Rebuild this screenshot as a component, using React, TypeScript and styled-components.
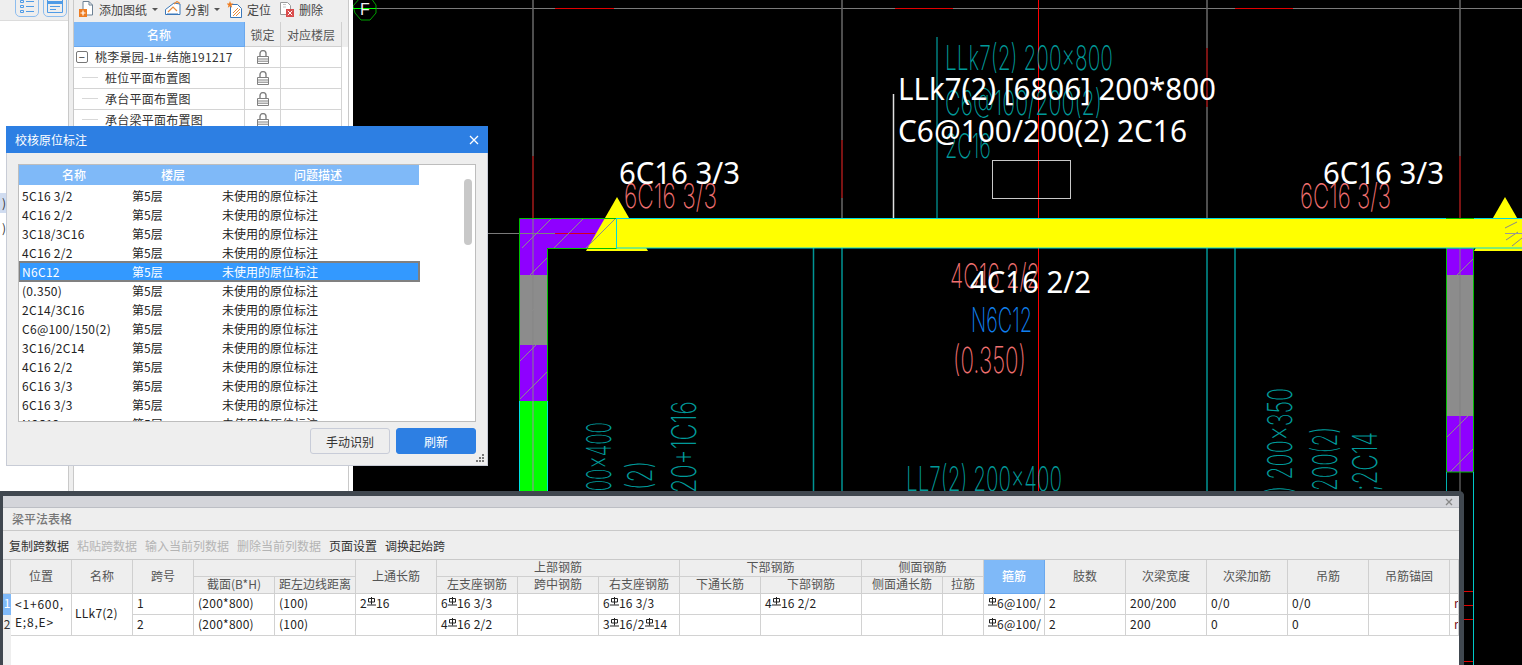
import React from "react";
import styled, { createGlobalStyle } from "styled-components";

const Global = createGlobalStyle`
  html, body { margin: 0; padding: 0; background: #fff; overflow: hidden; }
  * { box-sizing: border-box; }
`;

const FONT = `"Noto Sans CJK SC", "Noto Sans", sans-serif`;

const Screen = styled.div`
  position: relative;
  display: flex;
  width: 1522px;
  height: 665px;
  overflow: hidden;
  font-family: ${FONT};
  font-size: 12px;
  color: #333;
  background: #fff;
`;

/* ---------- left rail ---------- */
const LeftRail = styled.div`
  display: flex;
  flex-direction: column;
  flex: 0 0 69px;
  border-right: 1px solid #c9c9c9;
`;
const RailTools = styled.div`
  display: flex;
  flex: 0 0 21px;
  align-items: flex-end;
  gap: 4px;
  padding: 0 0 3px 15px;
  overflow: hidden;
  background: #eeeeee;
  border-bottom: 1px solid #dcdcdc;
`;
const RailButton = styled.div`
  display: flex;
  flex: 0 0 24px;
  height: 26px;
  align-items: flex-end;
  justify-content: center;
  padding-bottom: 3px;
  border: 1px solid #8dbdee;
  border-radius: 5px;
`;
const RailList = styled.div`
  flex: 1;
  padding-top: 172px;
  background: #fff;
`;
const RailItem = styled.div<{ $on?: boolean }>`
  display: flex;
  justify-content: flex-end;
  width: 6px;
  height: 20px;
  margin-bottom: 5px;
  overflow: hidden;
  line-height: 20px;
  white-space: nowrap;
  background: ${(p) => (p.$on ? "#d0dcf0" : "transparent")};
`;
const Gutter = styled.div`
  flex: 0 0 4px;
  background: #eeeeee;
`;

/* ---------- drawing list ---------- */
const SheetPanel = styled.div`
  display: flex;
  flex-direction: column;
  flex: 0 0 276px;
  border-left: 1px solid #c9c9c9;
  border-right: 1px solid #c9c9c9;
  background: #fff;
`;
const SheetTools = styled.div`
  display: flex;
  flex: 0 0 22px;
  align-items: center;
  padding: 0 0 4px 5px;
  background: #eeeeee;
`;
const Tool = styled.div<{ $gap: number }>`
  display: flex;
  align-items: center;
  gap: 4px;
  margin-right: ${(p) => p.$gap}px;
  color: #444;
  white-space: nowrap;
  line-height: 17px;
`;
const Caret = styled.span`
  width: 0;
  height: 0;
  margin-left: 1px;
  border-left: 3px solid transparent;
  border-right: 3px solid transparent;
  border-top: 3px solid #555;
`;
const SheetRow = styled.div<{ $head?: boolean }>`
  display: grid;
  grid-template-columns: 171px 36px 61px 6px;
  flex: 0 0 ${(p) => (p.$head ? 25 : 21)}px;
`;
const SheetHead = styled.div<{ $blue?: boolean }>`
  display: flex;
  align-items: center;
  justify-content: center;
  font-size: 12px;
  color: ${(p) => (p.$blue ? "#fff" : "#555")};
  background: ${(p) => (p.$blue ? "#7fb9f8" : "#eeeeee")};
  border-right: 1px solid ${(p) => (p.$blue ? "#6aa8ee" : "#d0d0d0")};
  border-bottom: 1px solid ${(p) => (p.$blue ? "#6aa8ee" : "#d0d0d0")};
  font-weight: ${(p) => (p.$blue ? 500 : 400)};
`;
const HeadFill = styled.div`
  background: #eeeeee;
`;
const SheetCell = styled.div<{ $center?: boolean }>`
  display: flex;
  align-items: center;
  justify-content: ${(p) => (p.$center ? "center" : "flex-start")};
  padding-bottom: 1px;
  border-right: 1px solid #d4d4d4;
  border-bottom: 1px solid #d4d4d4;
  color: #333;
  letter-spacing: 0.25px;
  white-space: nowrap;
`;
const TreeBox = styled.span`
  display: flex;
  align-items: center;
  justify-content: center;
  width: 12px;
  height: 12px;
  margin: 0 7px 0 2px;
  border: 1px solid #777;
  border-radius: 2px;
  font-size: 11px;
  line-height: 10px;
`;
const TreeDash = styled.span`
  width: 16px;
  height: 1px;
  margin: 0 7px 0 8px;
  background: #d8d8d8;
`;
const PanelGap = styled.div`
  flex: 0 0 4px;
  background: #fff;
`;

/* ---------- CAD canvas ---------- */
const Canvas = styled.svg`
  display: block;
  flex: 1;
  height: 665px;
  background: #000;
`;
const tones: Record<string, string> = {
  white: "#ffffff",
  teal: "#009a9a",
  red: "#f07070",
  blue: "#1080f0",
};
const CadLabel = styled.text<{ $tone: string; $solid?: boolean; $size: number }>`
  font-family: ${(p) => (p.$solid ? `"Noto Sans", sans-serif` : `Inter, sans-serif`)};
  font-weight: ${(p) => (p.$solid ? 400 : 200)};
  font-size: ${(p) => p.$size}px;
  fill: ${(p) => tones[p.$tone]};
  white-space: pre;
`;
const AxisLetter = styled.text`
  font-family: "Liberation Sans", sans-serif;
  font-size: 16px;
  fill: #f0f0f0;
`;

/* ---------- dialog ---------- */
const Dialog = styled.div`
  position: absolute;
  left: 6px;
  top: 126px;
  display: flex;
  flex-direction: column;
  width: 482px;
  height: 340px;
  background: #eeeeee;
  border: 1px solid #c8ccd6;
  border-top: none;
`;
const DialogTitle = styled.div`
  display: flex;
  flex: 0 0 27px;
  align-items: center;
  justify-content: space-between;
  margin: 0 -1px;
  padding: 0 9px;
  background: #2d7fe3;
  color: #fff;
  font-size: 12px;
`;
const DialogBody = styled.div`
  position: relative;
  display: flex;
  flex: 1;
  flex-direction: column;
  padding: 11px 11px 0;
`;
const ListBox = styled.div`
  position: relative;
  flex: 0 0 258px;
  overflow: hidden;
  background: #fff;
  border: 1px solid #bdbdbd;
`;
const DialogRow = styled.div<{ $selected?: boolean }>`
  position: relative;
  display: grid;
  grid-template-columns: 110px 88px 202px;
  width: 400px;
  height: 19px;
  line-height: 19px;
  color: ${(p) => (p.$selected ? "#fff" : "#222")};
  background: ${(p) => (p.$selected ? "#3399ff" : "transparent")};
  outline: ${(p) => (p.$selected ? "2px solid #808080" : "none")};
  outline-offset: -1px;
  & > span { padding-left: 3px; white-space: nowrap; }
  & > span:first-child { letter-spacing: 0.3px; }
  & > span:last-child { padding-left: 5px; }
`;
const DialogHead = styled.div`
  display: grid;
  grid-template-columns: 110px 88px 202px;
  width: 400px;
  height: 21px;
  background: #7fb9f8;
  border-bottom: 1px solid #fff;
  color: #fff;
  font-weight: 500;
  line-height: 20px;
  text-align: center;
`;
const ScrollThumb = styled.div`
  position: absolute;
  left: 445px;
  top: 14px;
  width: 8px;
  height: 66px;
  border-radius: 4px;
  background: #c8c8c8;
`;
const DialogActions = styled.div`
  display: flex;
  justify-content: flex-end;
  gap: 6px;
  margin-top: 6px;
`;
const ActionButton = styled.div<{ $primary?: boolean }>`
  display: flex;
  align-items: center;
  justify-content: center;
  width: 80px;
  height: 26px;
  border-radius: 3px;
  border: 1px solid ${(p) => (p.$primary ? "#2d7fe3" : "#c8ccd8")};
  background: ${(p) => (p.$primary ? "#2d7fe3" : "#eeeeee")};
  color: ${(p) => (p.$primary ? "#fff" : "#333")};
`;
const Grip = styled.svg`
  position: absolute;
  right: 2px;
  bottom: 2px;
`;

/* ---------- bottom table window ---------- */
const TableWindow = styled.div`
  position: absolute;
  left: 0;
  top: 491px;
  display: flex;
  flex-direction: column;
  width: 1464px;
  height: 174px;
  background: #fff;
  border: solid #40474f;
  border-width: 5px 5px 0 3px;
  border-top-right-radius: 5px;
`;
const WindowStrip = styled.div`
  display: flex;
  flex: 0 0 12px;
  align-items: center;
  justify-content: flex-end;
  padding-right: 6px;
  background: #d4d5da;
  border-bottom: 1px solid #bcbec4;
`;
const WindowTitle = styled.div`
  flex: 0 0 22px;
  padding-left: 9px;
  background: #eeeeee;
  border-bottom: 1px solid #c9c9c9;
  color: #777;
  font-weight: 500;
  line-height: 22px;
`;
const WindowTools = styled.div`
  display: flex;
  flex: 0 0 29px;
  align-items: center;
  gap: 8px;
  padding-left: 6px;
  background: #eeeeee;
  border-bottom: 1px solid #c9c9c9;
`;
const WindowTool = styled.span<{ $off?: boolean }>`
  color: ${(p) => (p.$off ? "#b4b4b4" : "#333")};
`;
const TableArea = styled.div`
  flex: 1;
  overflow: hidden;
  background: linear-gradient(to right, #eeeeee 8px, #ffffff 8px);
`;
const BeamTable = styled.table`
  width: 1456px;
  table-layout: fixed;
  border-collapse: separate;
  border-spacing: 0;
  font-size: 12px;
`;
const Th = styled.th<{ $blue?: boolean }>`
  height: 17px;
  padding: 0 0 2px;
  overflow: hidden;
  white-space: nowrap;
  font-weight: ${(p) => (p.$blue ? 500 : 400)};
  color: ${(p) => (p.$blue ? "#fff" : "#555")};
  line-height: 14px;
  background: ${(p) => (p.$blue ? "#7fb9f8" : "#eeeeee")};
  border-right: 1px solid ${(p) => (p.$blue ? "#6aa8ee" : "#cfcfcf")};
  border-bottom: 1px solid ${(p) => (p.$blue ? "#6aa8ee" : "#cfcfcf")};
`;
const Td = styled.td<{ $tone?: string }>`
  height: 21px;
  padding: 0 0 3px 4px;
  overflow: hidden;
  white-space: nowrap;
  line-height: 16px;
  letter-spacing: 0.25px;
  color: ${(p) => p.$tone ?? "#222"};
  border-right: 1px solid #d2d2d2;
  border-bottom: 1px solid #d2d2d2;
`;
const RowHead = styled.td<{ $on?: boolean }>`
  height: 21px;
  padding: 0 0 3px;
  line-height: 16px;
  text-align: center;
  color: ${(p) => (p.$on ? "#fff" : "#333")};
  background: ${(p) => (p.$on ? "#7fb9f8" : "#eeeeee")};
`;
const SpanCell = styled(Td)<{ $wide?: boolean }>`
  padding-left: ${(p) => (p.$wide ? 4 : 3)}px;
  line-height: 18px;
  letter-spacing: ${(p) => (p.$wide ? 0.8 : 0.25)}px;
  white-space: pre;
`;
const Mark = styled.svg`
  display: inline-block;
  vertical-align: 2px;
`;

/* ---------- small drawings ---------- */
const Rebar = () => (
  <Mark width="9" height="9" viewBox="0 0 9 9" fill="none" stroke="#222" strokeWidth="1">
    <path d="M1.500 1.500h6v3.500h-6zM4.500 0v7.500M0 8h9" />
  </Mark>
);
const Lock = () => (
  <svg width="12" height="14" viewBox="0 0 12 14" fill="none" stroke="#808080" strokeWidth="1">
    <path d="M3 6V3.600a3 3 0 0 1 6 0V6" strokeWidth="1.400" />
    <path d="M.5 6.500h11v7H.5zM.5 9h11M.5 11.200h11" />
  </svg>
);
const AddIcon = () => (
  <svg width="16" height="17" viewBox="0 0 16 17" fill="none">
    <path d="M4 .5h6l3.500 3.500v10H4z" fill="#fff" stroke="#6d8194" />
    <path d="M10 .5V4h3.500" stroke="#6d8194" />
    <rect x="0" y="8" width="8" height="8" fill="#ee7d22" />
    <path d="M4 9.500v5M1.500 12h5" stroke="#fff" strokeWidth="1.200" />
  </svg>
);
const SplitIcon = () => (
  <svg width="16" height="16" viewBox="0 0 16 16" fill="none">
    <path d="M.5 8.500 9 2l6 1v10.500H.5z" fill="#fff" stroke="#3a77b8" />
    <path d="M3 11 8 6l4 4M9 3l3-2.500 3 2" stroke="#e88b3a" strokeWidth="1.200" />
    <path d="M2 13h11" stroke="#3a77b8" />
  </svg>
);
const LocateIcon = () => (
  <svg width="16" height="17" viewBox="0 0 16 17" fill="none">
    <path d="M3.500 3.500h7l4 4v9h-11z" fill="#fff" stroke="#3a77b8" />
    <path d="M6 15l7-7M6 12l5-5M9 15l4-4" stroke="#e88b3a" />
    <path d="M3 0l1 2.400 2.500.2-2 1.600.7 2.500L3 5.300.8 6.700l.7-2.500-2-1.600L2 2.400z" fill="#ee7d22" />
  </svg>
);
const DeleteIcon = () => (
  <svg width="15" height="16" viewBox="0 0 15 16" fill="none">
    <path d="M.5 1.500h7l3 3v9H.5z" fill="#fff" stroke="#9a9a9a" />
    <path d="M3 3.500h3M3 6h3" stroke="#c6c6c6" />
    <rect x="6" y="8" width="8" height="8" fill="#d94b4b" />
    <path d="M7.800 9.800l4.400 4.400M12.200 9.800l-4.400 4.400" stroke="#fff" />
  </svg>
);
const ListGlyph = () => (
  <svg width="14" height="13" viewBox="0 0 14 13" fill="none" stroke="#4f9be6">
    <path d="M.5.500h3v2h-3zM.5 5.500h3v2h-3zM.5 10.500h3v2h-3zM6 1.500h8M6 6.500h8M6 11.500h8" />
  </svg>
);
const WindowGlyph = () => (
  <svg width="16" height="14" viewBox="0 0 16 14" fill="none" stroke="#4f9be6">
    <path d="M.5.500h15v13H.5z" />
    <path d="M.5 3.500h15" strokeWidth="3" />
    <path d="M3 7.500h10M3 10.500h6" />
  </svg>
);

/* ---------- data ---------- */
const sheets = ["桩位平面布置图", "承台平面布置图", "承台梁平面布置图"];
const notes = [
  "5C16 3/2", "4C16 2/2", "3C18/3C16", "4C16 2/2", "N6C12", "(0.350)", "2C14/3C16",
  "C6@100/150(2)", "3C16/2C14", "4C16 2/2", "6C16 3/3", "6C16 3/3", "N6C12",
];
const widths = [8, 61, 61, 61, 81, 81, 81, 81, 81, 81, 81, 101, 81, 41, 61, 81, 81, 81, 81, 81, 9];

const hatch = (x0: number, x1: number, y0: number, y1: number, step: number) => {
  const out: React.ReactNode[] = [];
  const run = x1 - x0;
  for (let y = y0 + step; y < y1 + run; y += step) {
    const top = Math.max(y - run, y0);
    const bottom = Math.min(y, y1);
    out.push(
      <line
        key={`${x0}-${y0}-${y}`}
        x1={x0 + (y - bottom)}
        y1={bottom}
        x2={x0 + (y - top)}
        y2={top}
        stroke="#8c8c8c"
      />
    );
  }
  return out;
};

const Thin = ({ x, y, w, size = 34, tone = "teal", rot, children }: {
  x: number; y: number; w: number; size?: number; tone?: string; rot?: boolean; children: string;
}) => (
  <CadLabel
    x={x}
    y={y}
    $tone={tone}
    $size={size}
    textLength={w}
    lengthAdjust="spacingAndGlyphs"
    transform={rot ? `rotate(-90 ${x} ${y})` : undefined}
  >
    {children}
  </CadLabel>
);
const Bold = ({ x, y, w, children }: { x: number; y: number; w: number; children: string }) => (
  <CadLabel x={x} y={y} $tone="white" $solid $size={31} textLength={w} lengthAdjust="spacingAndGlyphs">
    {children}
  </CadLabel>
);

const Cad = () => (
  <Canvas viewBox="353 0 1169 665" width="1169" height="665">
    {/* axes */}
    <g stroke="#7a7a7a" strokeWidth="1">
      <line x1="376" y1="8.500" x2="1522" y2="8.500" />
      <line x1="353" y1="233.500" x2="590" y2="233.500" />
    </g>
    <g stroke="#686868" strokeWidth="1.500">
      <line x1="533" y1="0" x2="533" y2="218" />
      <line x1="842" y1="0" x2="842" y2="218" />
      <line x1="1207" y1="0" x2="1207" y2="218" />
      <line x1="1460" y1="0" x2="1460" y2="218" />
    </g>
    <g stroke="#e00000" strokeWidth="1">
      <line x1="555" y1="8.500" x2="614" y2="8.500" />
      <line x1="895" y1="8.500" x2="953" y2="8.500" />
      <line x1="1235" y1="8.500" x2="1293" y2="8.500" />
    </g>
    <g stroke="#8b0000" strokeWidth="1.500">
      <line x1="533" y1="156" x2="533" y2="218" />
      <line x1="842" y1="140" x2="842" y2="198" />
      <line x1="1207" y1="48" x2="1207" y2="107" />
      <line x1="1460" y1="156" x2="1460" y2="218" />
    </g>
    <line x1="1038.500" y1="0" x2="1038.500" y2="491" stroke="#ff0000" strokeWidth="1" />
    <line x1="937" y1="37" x2="937" y2="218" stroke="#007f7f" strokeWidth="1.500" />
    <line x1="893.500" y1="94" x2="893.500" y2="218" stroke="#e0e0e0" strokeWidth="1.500" />
    <rect x="992.500" y="160.500" width="78" height="38" fill="none" stroke="#c8c8c8" />

    {/* F axis bubble */}
    <polygon points="360,-2 371,-2 376,5 376,13 370,20 361,20 355,13 353,6" fill="none" stroke="#00a000" />
    <line x1="353" y1="8.500" x2="376" y2="8.500" stroke="#00ff00" />
    <AxisLetter x="360" y="15">F</AxisLetter>

    {/* secondary beams */}
    <g stroke="#009494" strokeWidth="1.500">
      <line x1="813.500" y1="248" x2="813.500" y2="491" />
      <line x1="842" y1="248" x2="842" y2="491" />
      <line x1="1207" y1="248" x2="1207" y2="491" />
      <line x1="1235" y1="248" x2="1235" y2="491" />
    </g>

    {/* left column */}
    <rect x="519" y="219" width="97" height="29" fill="#8f00ff" />
    <rect x="519" y="248" width="28" height="27" fill="#8f00ff" />
    <rect x="519" y="275" width="28" height="70" fill="#8c8c8c" />
    <rect x="519" y="345" width="28" height="56" fill="#8f00ff" />
    <rect x="519" y="401" width="28" height="90" fill="#00ff00" />
    <line x1="533" y1="401" x2="533" y2="491" stroke="#70b070" strokeWidth="1.500" />
    <line x1="533" y1="219" x2="533" y2="401" stroke="#858585" strokeWidth="1" />
    <line x1="555" y1="233.500" x2="595" y2="233.500" stroke="#d00020" />
    <line x1="519" y1="233.500" x2="555" y2="233.500" stroke="#808080" />
    <polygon points="617,197 648,251 586,251" fill="#ffff00" />
    {hatch(519, 616, 219, 248, 32)}
    {hatch(519, 547, 248, 401, 38)}
    <path d="M519.500 491V218.500H616.500V248.500H547.500V491" fill="none" stroke="#00c000" strokeWidth="1" />
    <line x1="519.500" y1="401" x2="519.500" y2="491" stroke="#00e0e0" />
    <line x1="547.500" y1="401" x2="547.500" y2="491" stroke="#00e0e0" />

    {/* right column */}
    <polygon points="1505,197 1536,251 1474,251" fill="#ffff00" />
    <rect x="1446" y="248" width="28" height="27" fill="#8f00ff" />
    <rect x="1446" y="275" width="28" height="141" fill="#8c8c8c" />
    <rect x="1446" y="416" width="28" height="56" fill="#8f00ff" />
    {hatch(1446, 1474, 248, 472, 38)}
    <line x1="1460" y1="248" x2="1460" y2="491" stroke="#808080" strokeWidth="1" />
    <rect x="1446.500" y="248" width="27" height="224" fill="none" stroke="#00c000" />
    <line x1="1446.500" y1="472" x2="1446.500" y2="491" stroke="#00b0b0" />
    <line x1="1473.500" y1="472" x2="1473.500" y2="665" stroke="#00c8c8" />
    <g stroke="#e00000">
      <line x1="1464" y1="591.500" x2="1473" y2="591.500" />
      <line x1="1464" y1="605.500" x2="1473" y2="605.500" />
      <line x1="1464" y1="619.500" x2="1473" y2="619.500" />
      <line x1="1464" y1="661.500" x2="1473" y2="661.500" />
    </g>

    {/* selected beam */}
    <rect x="616.500" y="218.500" width="906" height="29.500" fill="#ffff00" stroke="#00d8e0" />
    <line x1="1446" y1="218.500" x2="1474" y2="218.500" stroke="#00c000" />
    <path d="M1505 228l12-6M1506 240l12-8M1512 246l10-8" stroke="#888" fill="none" />
    <line x1="1505" y1="233.500" x2="1522" y2="233.500" stroke="#999" />

    {/* drawing text */}
    <Thin x={945} y={70} w={168}>LLk7(2) 200x800</Thin>
    <Thin x={945} y={115} w={157}>C6@100/200(2)</Thin>
    <Thin x={945} y={158} w={46}>2C16</Thin>
    <Thin x={624} y={208} w={93} tone="red">6C16 3/3</Thin>
    <Thin x={1300} y={208} w={91} tone="red">6C16 3/3</Thin>
    <Thin x={950} y={288} w={90} tone="red">4C16 2/2</Thin>
    <Thin x={971} y={332} w={61} tone="blue">N6C12</Thin>
    <Thin x={953} y={373} w={73} size={36} tone="red">(0.350)</Thin>
    <Thin x={906} y={491} w={156}>LL7(2) 200x400</Thin>
    <Thin x={611} y={503} w={81} rot>200x400</Thin>
    <Thin x={652} y={490} w={29} rot>(2)</Thin>
    <Thin x={696} y={493} w={92} rot>20+1C16</Thin>
    <Thin x={1292} y={493} w={105} rot>) 200x350</Thin>
    <Thin x={1337} y={491} w={64} rot>200(2)</Thin>
    <Thin x={1377} y={491} w={59} rot>;2C14</Thin>

    <Bold x={898} y={100} w={318}>LLk7(2) [6806] 200*800</Bold>
    <Bold x={898} y={142} w={289}>C6@100/200(2) 2C16</Bold>
    <Bold x={619} y={184} w={121}>6C16 3/3</Bold>
    <Bold x={1323} y={184} w={121}>6C16 3/3</Bold>
    <Bold x={970} y={293} w={121}>4C16 2/2</Bold>
  </Canvas>
);

export default function App() {
  return (
    <Screen>
      <Global />
      <LeftRail>
        <RailTools>
          <RailButton><ListGlyph /></RailButton>
          <RailButton><WindowGlyph /></RailButton>
        </RailTools>
        <RailList>
          <RailItem $on>)</RailItem>
          <RailItem>)</RailItem>
        </RailList>
      </LeftRail>
      <Gutter />
      <SheetPanel>
        <SheetTools>
          <Tool $gap={7}><AddIcon />添加图纸<Caret /></Tool>
          <Tool $gap={7}><SplitIcon />分割<Caret /></Tool>
          <Tool $gap={9}><LocateIcon />定位</Tool>
          <Tool $gap={0}><DeleteIcon />删除</Tool>
        </SheetTools>
        <SheetRow $head>
          <SheetHead $blue>名称</SheetHead>
          <SheetHead>锁定</SheetHead>
          <SheetHead>对应楼层</SheetHead>
          <HeadFill />
        </SheetRow>
        <SheetRow>
          <SheetCell><TreeBox>−</TreeBox>桃李景园-1#-结施191217</SheetCell>
          <SheetCell $center><Lock /></SheetCell>
          <SheetCell />
        </SheetRow>
        {sheets.map((s) => (
          <SheetRow key={s}>
            <SheetCell><TreeDash />{s}</SheetCell>
            <SheetCell $center><Lock /></SheetCell>
            <SheetCell />
          </SheetRow>
        ))}
      </SheetPanel>
      <PanelGap />
      <Cad />

      <Dialog>
        <DialogTitle>
          校核原位标注
          <svg width="10" height="10" viewBox="0 0 10 10" stroke="#fff" strokeWidth="1.300">
            <path d="M1 1l8 8M9 1l-8 8" />
          </svg>
        </DialogTitle>
        <DialogBody>
          <ListBox>
            <DialogHead>
              <span>名称</span>
              <span>楼层</span>
              <span>问题描述</span>
            </DialogHead>
            {notes.map((n, i) => (
              <DialogRow key={i} $selected={i === 4}>
                <span>{n}</span>
                <span>第5层</span>
                <span>未使用的原位标注</span>
              </DialogRow>
            ))}
            <ScrollThumb />
          </ListBox>
          <DialogActions>
            <ActionButton>手动识别</ActionButton>
            <ActionButton $primary>刷新</ActionButton>
          </DialogActions>
          <Grip width="9" height="9" viewBox="0 0 9 9" fill="#777">
            <path d="M6 0h2v2H6zM3 3h2v2H3zM6 3h2v2H6zM0 6h2v2H0zM3 6h2v2H3zM6 6h2v2H6z" />
          </Grip>
        </DialogBody>
      </Dialog>

      <TableWindow>
        <WindowStrip>
          <svg width="8" height="8" viewBox="0 0 8 8" stroke="#888" strokeWidth="1.300">
            <path d="M1 1l6 6M7 1l-6 6" />
          </svg>
        </WindowStrip>
        <WindowTitle>梁平法表格</WindowTitle>
        <WindowTools>
          <WindowTool>复制跨数据</WindowTool>
          <WindowTool $off>粘贴跨数据</WindowTool>
          <WindowTool $off>输入当前列数据</WindowTool>
          <WindowTool $off>删除当前列数据</WindowTool>
          <WindowTool>页面设置</WindowTool>
          <WindowTool>调换起始跨</WindowTool>
        </WindowTools>
        <TableArea>
          <BeamTable>
            <colgroup>
              {widths.map((w, i) => <col key={i} style={{ width: w }} />)}
            </colgroup>
            <thead>
              <tr>
                <Th rowSpan={2} />
                <Th rowSpan={2}>位置</Th>
                <Th rowSpan={2}>名称</Th>
                <Th rowSpan={2}>跨号</Th>
                <Th colSpan={2} />
                <Th rowSpan={2}>上通长筋</Th>
                <Th colSpan={3}>上部钢筋</Th>
                <Th colSpan={2}>下部钢筋</Th>
                <Th colSpan={2}>侧面钢筋</Th>
                <Th rowSpan={2} $blue>箍筋</Th>
                <Th rowSpan={2}>肢数</Th>
                <Th rowSpan={2}>次梁宽度</Th>
                <Th rowSpan={2}>次梁加筋</Th>
                <Th rowSpan={2}>吊筋</Th>
                <Th rowSpan={2}>吊筋锚固</Th>
                <Th rowSpan={2} />
              </tr>
              <tr>
                <Th>截面(B*H)</Th>
                <Th>距左边线距离</Th>
                <Th>左支座钢筋</Th>
                <Th>跨中钢筋</Th>
                <Th>右支座钢筋</Th>
                <Th>下通长筋</Th>
                <Th>下部钢筋</Th>
                <Th>侧面通长筋</Th>
                <Th>拉筋</Th>
              </tr>
            </thead>
            <tbody>
              <tr>
                <RowHead $on>1</RowHead>
                <SpanCell rowSpan={2} $wide>{"<1+600,\nE;8,E>"}</SpanCell>
                <SpanCell rowSpan={2}>LLk7(2)</SpanCell>
                <Td>1</Td>
                <Td>(200*800)</Td>
                <Td>(100)</Td>
                <Td>2<Rebar />16</Td>
                <Td>6<Rebar />16 3/3</Td>
                <Td />
                <Td>6<Rebar />16 3/3</Td>
                <Td />
                <Td>4<Rebar />16 2/2</Td>
                <Td />
                <Td />
                <Td><Rebar />6@100/</Td>
                <Td>2</Td>
                <Td>200/200</Td>
                <Td>0/0</Td>
                <Td>0/0</Td>
                <Td />
                <Td $tone="#7a1020">r</Td>
              </tr>
              <tr>
                <RowHead>2</RowHead>
                <Td>2</Td>
                <Td>(200*800)</Td>
                <Td>(100)</Td>
                <Td />
                <Td>4<Rebar />16 2/2</Td>
                <Td />
                <Td>3<Rebar />16/2<Rebar />14</Td>
                <Td />
                <Td />
                <Td />
                <Td />
                <Td><Rebar />6@100/</Td>
                <Td>2</Td>
                <Td>200</Td>
                <Td>0</Td>
                <Td>0</Td>
                <Td />
                <Td $tone="#7a1020">r</Td>
              </tr>
            </tbody>
          </BeamTable>
        </TableArea>
      </TableWindow>
    </Screen>
  );
}
